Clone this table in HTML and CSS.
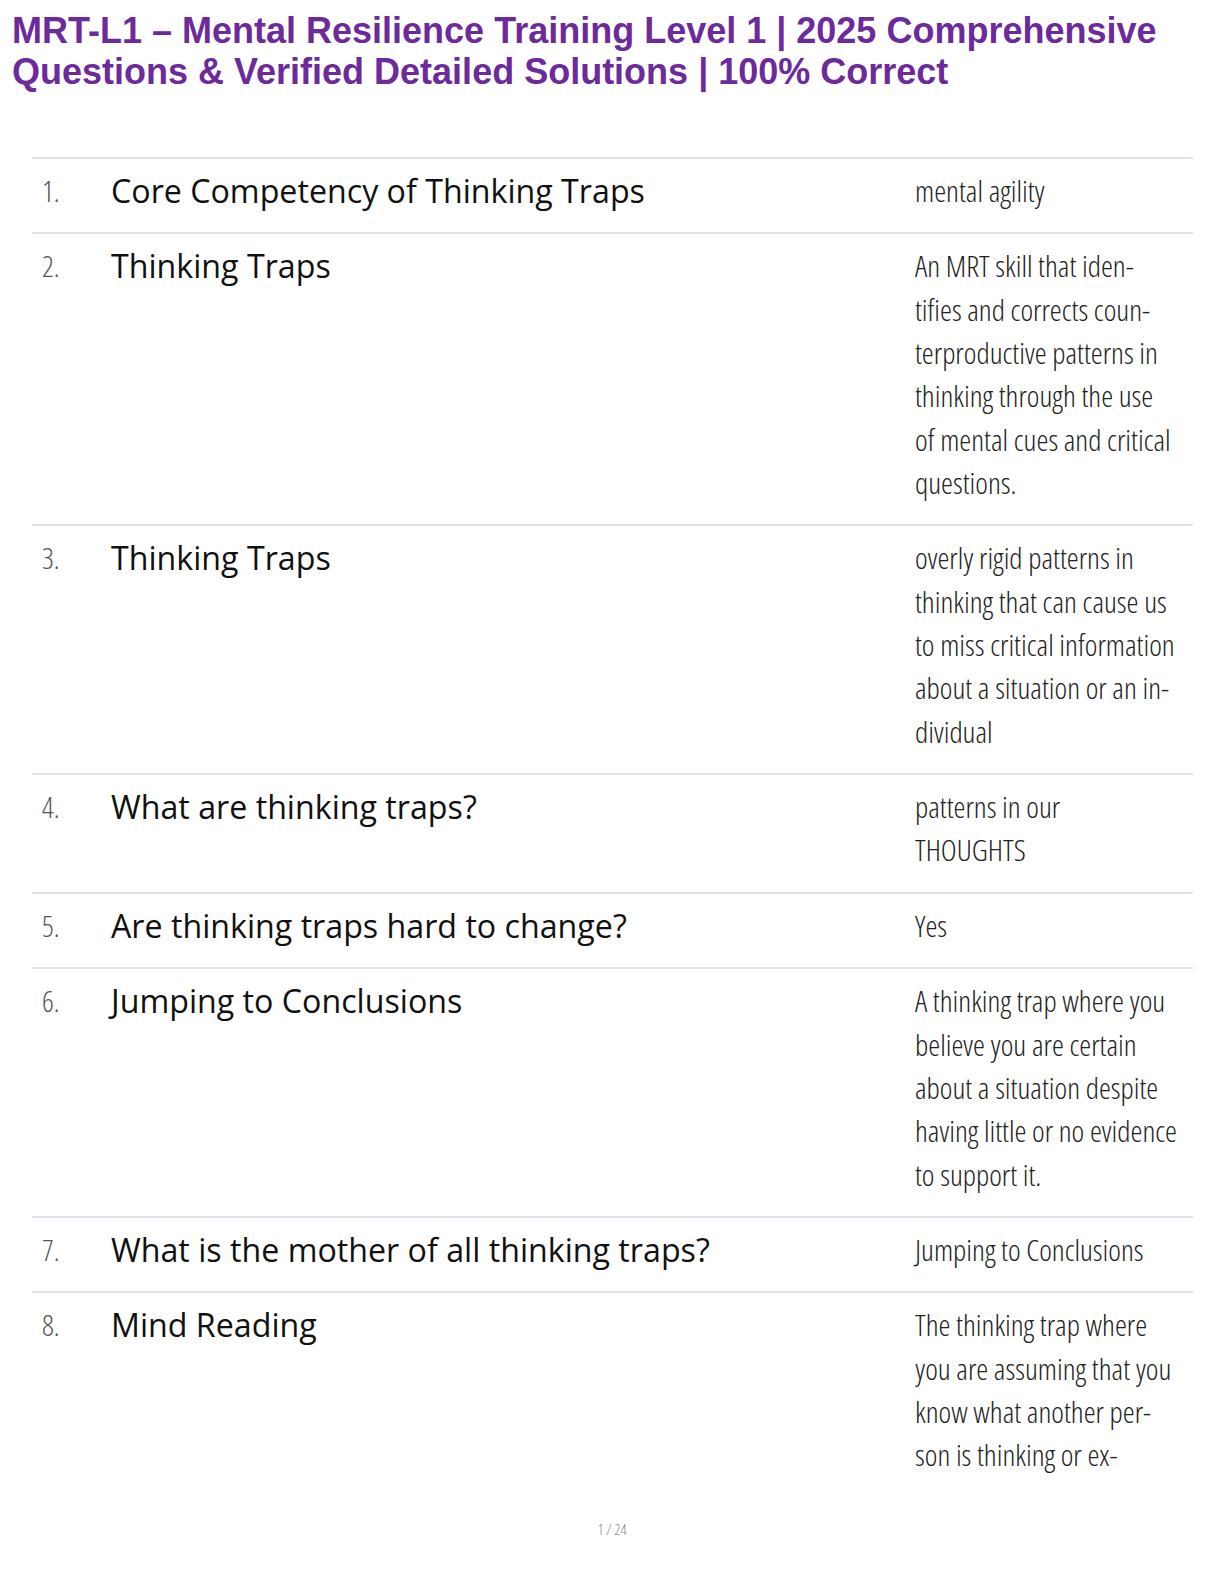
FILE: index.html
```html
<!DOCTYPE html>
<html lang="en">
<head>
<meta charset="utf-8">
<title>MRT-L1</title>
<link rel="stylesheet" href="styles.css">
</head>
<body>
<div class="page">
  <h1 class="title">MRT-L1 – Mental Resilience Training Level 1 | 2025 Comprehensive Questions &amp; Verified Detailed Solutions | 100% Correct</h1>
  <div class="table">
    <div class="row">
      <div class="num">1.</div>
      <div class="q">Core Competency of Thinking Traps</div>
      <div class="a">mental agility</div>
    </div>
    <div class="row">
      <div class="num">2.</div>
      <div class="q">Thinking Traps</div>
      <div class="a">An MRT skill that iden-<br>tifies and corrects coun-<br>terproductive patterns in<br>thinking through the use<br>of mental cues and critical<br>questions.</div>
    </div>
    <div class="row">
      <div class="num">3.</div>
      <div class="q">Thinking Traps</div>
      <div class="a">overly rigid patterns in<br>thinking that can cause us<br>to miss critical information<br>about a situation or an in-<br>dividual</div>
    </div>
    <div class="row">
      <div class="num">4.</div>
      <div class="q">What are thinking traps?</div>
      <div class="a">patterns in our<br>THOUGHTS</div>
    </div>
    <div class="row">
      <div class="num">5.</div>
      <div class="q">Are thinking traps hard to change?</div>
      <div class="a">Yes</div>
    </div>
    <div class="row">
      <div class="num">6.</div>
      <div class="q">Jumping to Conclusions</div>
      <div class="a">A thinking trap where you<br>believe you are certain<br>about a situation despite<br>having little or no evidence<br>to support it.</div>
    </div>
    <div class="row">
      <div class="num">7.</div>
      <div class="q">What is the mother of all thinking traps?</div>
      <div class="a">Jumping to Conclusions</div>
    </div>
    <div class="row last">
      <div class="num">8.</div>
      <div class="q">Mind Reading</div>
      <div class="a">The thinking trap where<br>you are assuming that you<br>know what another per-<br>son is thinking or ex-</div>
    </div>
  </div>
  <div class="footer">1 / 24</div>
</div>
</body>
</html>
```

FILE: styles.css
```css
html, body {
  margin: 0;
  padding: 0;
  background: #ffffff;
}

.page {
  width: 1224px;
  height: 1584px;
  position: relative;
  overflow: hidden;
}

.title {
  margin: 0;
  padding: 11px 20px 0 12px;
  font-family: "Liberation Sans", Arial, sans-serif;
  font-weight: 700;
  font-size: 36px;
  line-height: 40.5px;
  color: #6c2a9b;
}

.table {
  margin: 65px 31px 0 32px;
  border-top: 2px solid #e2e2ea;
}

.row {
  display: grid;
  grid-template-columns: 69px 804px 1fr;
  padding: 10px 0 20px 10px;
  border-bottom: 2px solid #e2e2ea;
  line-height: 43.35px;
}

.row.last {
  border-bottom: none;
}

.num {
  font-family: "Open Sans", sans-serif;
  font-weight: 300;
  font-stretch: 75%;
  font-size: 29px;
  color: #555555;
}

.q {
  font-family: "Open Sans", sans-serif;
  font-weight: 400;
  font-size: 32.2px;
  color: #111111;
}

.a {
  font-family: "Open Sans", sans-serif;
  font-weight: 300;
  font-stretch: 75%;
  font-size: 30.2px;
  color: #222222;
  white-space: nowrap;
}

.footer {
  position: absolute;
  left: 0;
  right: 0;
  top: 1519px;
  text-align: center;
  font-family: "Open Sans", sans-serif;
  font-weight: 300;
  font-stretch: 75%;
  font-size: 15px;
  color: #888888;
}
```
